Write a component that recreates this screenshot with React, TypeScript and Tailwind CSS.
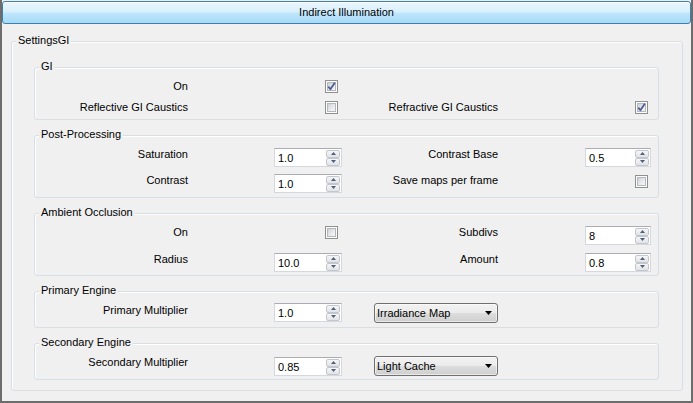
import React from "react";

function Check({ checked }: { checked?: boolean }) {
  return (
    <div className="relative w-[13px] h-[13px] border border-[#8e8f8f] bg-white p-px">
      <div className="w-full h-full border border-[#b4b8be] bg-[linear-gradient(135deg,#cdd0d5_0%,#e9eaec_55%,#f7f7f7_100%)]" />
      {checked && (
        <svg className="absolute left-0 top-0" width="11" height="11" viewBox="0 0 11 11">
          <path d="M2.3 5.6 L4.4 8.3 L8.8 1.8" fill="none" stroke="#4a5f97" strokeWidth="1.8" strokeLinejoin="round" />
        </svg>
      )}
    </div>
  );
}

function SpinBtn({ up }: { up?: boolean }) {
  return (
    <div className="w-[14px] h-[8px] border border-[#c3c7cd] rounded-[2px] bg-[linear-gradient(to_bottom,#f7f7f7_0%,#ececec_50%,#dfe3e8_100%)] flex items-center justify-center">
      <svg width="5" height="3" viewBox="0 0 5 3">
        {up ? <path d="M0 3 L5 3 L2.5 0 Z" fill="#4d5f7f" /> : <path d="M0 0 L5 0 L2.5 3 Z" fill="#4d5f7f" />}
      </svg>
    </div>
  );
}

function Spin({ value, w }: { value: string; w: string }) {
  return (
    <div className={`${w} h-[19px] bg-white border border-[#d5d9df] border-t-[#abadb3] flex items-center`}>
      <span className="flex-1 pl-[3px] leading-[13px] pt-[2px]">{value}</span>
      <div className="flex flex-col pr-px">
        <SpinBtn up />
        <SpinBtn />
      </div>
    </div>
  );
}

function Combo({ value }: { value: string }) {
  return (
    <div className="ml-[32px] w-[124px] h-[20px] border border-[#707070] rounded-[3px] bg-[linear-gradient(to_bottom,#f2f2f2_0%,#ebebeb_50%,#dddddd_50%,#cfcfcf_100%)] shadow-[inset_0_0_0_1px_rgba(255,255,255,0.55)] flex items-center pl-[2px] pr-[5px]">
      <span className="flex-1 leading-[13px]">{value}</span>
      <svg width="7" height="4" viewBox="0 0 7 4">
        <path d="M0 0 L7 0 L3.5 4 Z" fill="#000" />
      </svg>
    </div>
  );
}

function Group({ title, className, children }: { title: string; className: string; children?: React.ReactNode }) {
  return (
    <div className={`relative border border-[#d5dfe5] rounded-[3px] shadow-[inset_1px_1px_0_#ffffff] ${className}`}>
      <span className="absolute left-[4px] -top-[8px] px-[2px] bg-[#f0f0f0] leading-[13px]">{title}</span>
      {children}
    </div>
  );
}

function LeftCell({ label, children }: { label: string; children?: React.ReactNode }) {
  return (
    <>
      <div className="w-[153px] text-right leading-[13px]">{label}</div>
      <div className="ml-[86px] w-[68px] flex">{children}</div>
    </>
  );
}

function RightCell({ label, children }: { label: string; children?: React.ReactNode }) {
  return (
    <>
      <div className="w-[156px] text-right leading-[13px]">{label}</div>
      <div className="ml-[87px] w-[66px] flex">{children}</div>
    </>
  );
}

export default function App() {
  return (
    <div className="w-[693px] h-[403px] bg-[#f0f0f0] border-x-2 border-b-2 border-[#6d6d6d] flex flex-col text-[11px] text-black font-['Liberation_Sans',Arial,sans-serif]">
      <div className="mt-px h-[23px] border border-[#3c7fb1] rounded-[3px] bg-[linear-gradient(to_bottom,#eaf6fd_0%,#d9f0fc_45%,#bee6fd_55%,#a7d9f5_100%)] shadow-[inset_0_1px_0_#ffffff] flex items-center justify-center leading-[13px]">
        Indirect Illumination
      </div>

      <Group title="SettingsGI" className="mt-[17px] ml-[9px] mr-[8px] h-[350px] pt-[25px] flex flex-col">
        <Group title="GI" className="ml-[22px] mr-[23px] h-[53px] pt-[12px] flex flex-col gap-[8px]">
          <div className="flex items-start h-[13px]">
            <LeftCell label="On">
              <div className="ml-auto mr-[4px]"><Check checked /></div>
            </LeftCell>
          </div>
          <div className="flex items-start h-[13px]">
            <LeftCell label="Reflective GI Caustics">
              <div className="ml-auto mr-[4px]"><Check /></div>
            </LeftCell>
            <RightCell label="Refractive GI Caustics">
              <div className="ml-auto mr-[3px]"><Check checked /></div>
            </RightCell>
          </div>
        </Group>

        <Group title="Post-Processing" className="mt-[15px] ml-[22px] mr-[23px] h-[63px] pt-[12px] flex flex-col gap-[6px]">
          <div className="flex items-start h-[19px]">
            <LeftCell label="Saturation">
              <Spin value="1.0" w="w-[68px]" />
            </LeftCell>
            <RightCell label="Contrast Base">
              <Spin value="0.5" w="w-[66px]" />
            </RightCell>
          </div>
          <div className="flex items-start h-[19px] pt-px">
            <LeftCell label="Contrast">
              <Spin value="1.0" w="w-[68px]" />
            </LeftCell>
            <RightCell label="Save maps per frame">
              <div className="ml-auto mr-[3px] mt-px"><Check /></div>
            </RightCell>
          </div>
        </Group>

        <Group title="Ambient Occlusion" className="mt-[15px] ml-[22px] mr-[23px] h-[63px] pt-[12px] flex flex-col gap-[8px]">
          <div className="flex items-start h-[19px]">
            <LeftCell label="On">
              <div className="ml-auto mr-[4px]"><Check /></div>
            </LeftCell>
            <RightCell label="Subdivs">
              <Spin value="8" w="w-[66px]" />
            </RightCell>
          </div>
          <div className="flex items-start h-[19px]">
            <LeftCell label="Radius">
              <Spin value="10.0" w="w-[68px]" />
            </LeftCell>
            <RightCell label="Amount">
              <Spin value="0.8" w="w-[66px]" />
            </RightCell>
          </div>
        </Group>

        <Group title="Primary Engine" className="mt-[15px] ml-[22px] mr-[23px] h-[37px] pt-[11px] flex flex-col">
          <div className="flex items-start h-[20px]">
            <div className="w-[153px] text-right leading-[13px] pt-px">Primary Multiplier</div>
            <div className="ml-[86px] w-[68px] flex">
              <Spin value="1.0" w="w-[68px]" />
            </div>
            <Combo value="Irradiance Map" />
          </div>
        </Group>

        <Group title="Secondary Engine" className="mt-[15px] ml-[22px] mr-[23px] h-[37px] pt-[12px] flex flex-col">
          <div className="flex items-start h-[20px]">
            <div className="w-[153px] text-right leading-[13px]">Secondary Multiplier</div>
            <div className="ml-[86px] w-[68px] flex pt-px">
              <Spin value="0.85" w="w-[68px]" />
            </div>
            <Combo value="Light Cache" />
          </div>
        </Group>
      </Group>
    </div>
  );
}
